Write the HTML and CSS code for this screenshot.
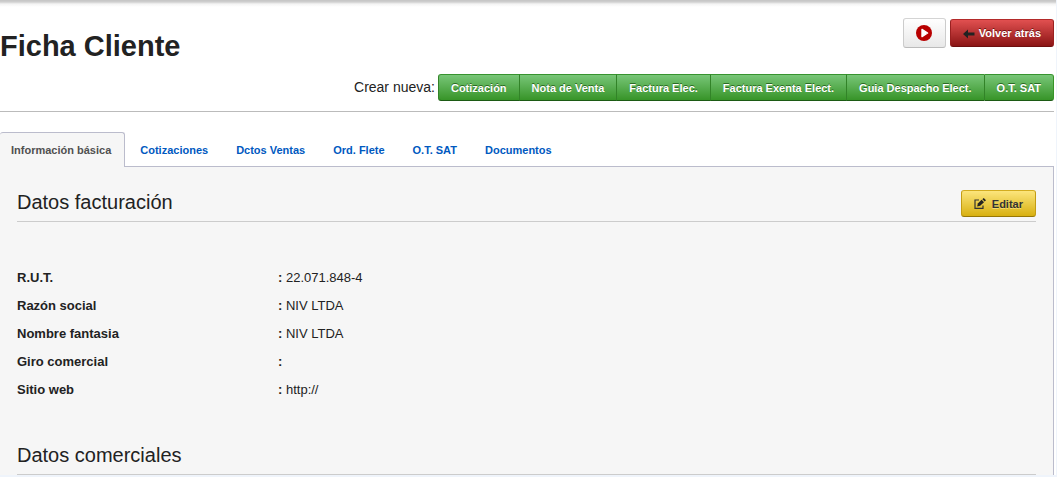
FILE: index.html
```
<!DOCTYPE html>
<html lang="es">
	<head>
		<meta charset="UTF-8" />
		<meta
			name="viewport"
			content="width=device-width, initial-scale=1.0" />
		<title>Ficha Cliente</title>
		<link rel="stylesheet" href="styles.css">
	</head>
	<body>
		<div class="page">
			<header class="header">
				<div class="title-row">
					<h1>Ficha Cliente</h1>
					<div class="actions">
						<button type="button" class="btn btn-white" aria-label="Reproducir">
							<svg width="16" height="16" viewBox="0 0 16 16">
								<circle cx="8" cy="8" r="8" fill="#b80000" />
								<path d="M6 4.4 L11.6 8 L6 11.6 Z" fill="#fff" stroke="#fff" stroke-width="1.4" stroke-linejoin="round" />
							</svg>
						</button>
						<button type="button" class="btn btn-red">
							<svg class="arrow" width="12" height="10" viewBox="0 0 12 10">
								<path d="M0 5 L5 0.5 V3.5 H11.5 V6.5 H5 V9.5 Z" fill="#222" />
							</svg>
							Volver atrás
						</button>
					</div>
				</div>
				<div class="create-row">
					<span>Crear nueva:</span>
					<div class="btn-group">
						<button type="button" class="btn btn-green">Cotización</button>
						<button type="button" class="btn btn-green">Nota de Venta</button>
						<button type="button" class="btn btn-green">Factura Elec.</button>
						<button type="button" class="btn btn-green">Factura Exenta Elect.</button>
						<button type="button" class="btn btn-green">Guia Despacho Elect.</button>
						<button type="button" class="btn btn-green">O.T. SAT</button>
					</div>
				</div>
			</header>

			<nav class="tabs">
				<a href="#basica" class="active">Información básica</a>
				<a href="#cotizaciones">Cotizaciones</a>
				<a href="#ventas">Dctos Ventas</a>
				<a href="#flete">Ord. Flete</a>
				<a href="#ot">O.T. SAT</a>
				<a href="#documentos">Documentos</a>
			</nav>

			<main class="panel" id="basica">
				<section>
					<div class="section-title">
						<h2>Datos facturación</h2>
						<button type="button" class="btn btn-yellow">
							<svg width="12" height="12" viewBox="0 0 12 12">
								<path d="M5 2 H1 V10.4 H9 V7.5" fill="none" stroke="#333" stroke-width="1.2" />
								<path d="M3.2 8.4 L3.8 5.4 L7.6 1.8 L10 4.2 L6.2 7.8 Z" fill="#222" />
								<path d="M8.4 1.2 L9.7 0 L12 2.3 L10.7 3.5 Z" fill="#222" />
							</svg>
							Editar
						</button>
					</div>
					<table class="data">
						<tr>
							<th scope="row">R.U.T.</th>
							<td><b>:</b> 22.071.848-4</td>
						</tr>
						<tr>
							<th scope="row">Razón social</th>
							<td><b>:</b> NIV LTDA</td>
						</tr>
						<tr>
							<th scope="row">Nombre fantasia</th>
							<td><b>:</b> NIV LTDA</td>
						</tr>
						<tr>
							<th scope="row">Giro comercial</th>
							<td><b>:</b></td>
						</tr>
						<tr>
							<th scope="row">Sitio web</th>
							<td><b>:</b> http://</td>
						</tr>
					</table>
				</section>
				<section>
					<div class="section-title">
						<h2>Datos comerciales</h2>
					</div>
				</section>
			</main>
		</div>
	</body>
</html>
```
FILE: styles.css
```
* {
	box-sizing: border-box;
}

body {
	margin: 0;
	background-color: #eff4fb;
	font-family: "Liberation Sans", Arial, sans-serif;
	font-size: 13px;
	color: #222;
}

.page {
	margin-right: 1px;
	padding-right: 2px;
	background: #fff linear-gradient(#c4c4c4, #d0d0d0 2px, #f4f4f4 4px, #fff 7px) no-repeat;
}

.header {
	padding-top: 18px;
	border-bottom: 1px solid #bbb;
}

.title-row {
	display: flex;
	justify-content: space-between;
	align-items: flex-start;
	height: 56px;
}

h1 {
	margin: 10px 0 0;
	font-size: 29px;
	line-height: 36px;
}

.actions {
	display: flex;
	align-items: center;
	gap: 4px;
}

.btn {
	display: flex;
	align-items: center;
	justify-content: center;
	height: 28px;
	padding: 0 12px;
	border: 1px solid;
	border-radius: 3px;
	font-family: inherit;
	font-size: 11px;
	font-weight: 700;
	white-space: nowrap;
	cursor: pointer;
}

.btn-white {
	width: 43px;
	height: 30px;
	background: linear-gradient(#fff, #e8e8e8);
	border-color: #d4d4d4 #ccc #bbb;
}

.btn-white svg {
	flex-shrink: 0;
}

.btn-red {
	gap: 4px;
	background: linear-gradient(#e15050, #8b1515);
	border-color: #b32a2a #9a2020 #6e0f0f;
	color: #fff;
	text-shadow: 0 -1px 0 #701010;
}

.arrow {
	margin-top: 2px;
}

.create-row {
	display: flex;
	justify-content: flex-end;
	gap: 3px;
	height: 37px;
	font-size: 14px;
	line-height: 26px;
}

.btn-group {
	display: flex;
}

.btn-green {
	height: 27px;
	background: linear-gradient(#78c678, #379428);
	border-color: #37932f #379428 #1c5a14;
	border-left-color: #328328;
	border-right-width: 0;
	border-radius: 0;
	color: #fff;
	text-shadow: 0 -1px 0 #2a6b22;
}

.btn-green:first-child {
	border-radius: 3px 0 0 3px;
}

.btn-green:last-child {
	border-right-width: 1px;
	border-radius: 0 3px 3px 0;
}

.tabs {
	display: flex;
	gap: 2px;
	margin-top: 20px;
	border-bottom: 1px solid #bbbccc;
}

.tabs a {
	padding: 1px 12px 0;
	border: 1px solid transparent;
	border-bottom: 0;
	font-size: 11px;
	font-weight: 700;
	line-height: 32px;
	color: #0059bf;
	text-decoration: none;
}

.tabs .active {
	margin-bottom: -1px;
	padding: 1px 13px 1px 11px;
	background-color: #f6f6f6;
	border-color: #bbbccc;
	border-left: 0;
	border-radius: 3px 3px 0 0;
	color: #505050;
}

.panel {
	padding: 23px 17px 0;
	background-color: #f6f6f6;
	border-right: 1px solid #bbbccc;
}

.section-title {
	display: flex;
	justify-content: space-between;
	height: 32px;
	border-bottom: 1px solid #ccc;
}

h2 {
	margin: 0;
	font-size: 20px;
	font-weight: 400;
	line-height: 24px;
}

.btn-yellow {
	gap: 6px;
	height: 27px;
	background: linear-gradient(#fce57c, #d8b010);
	border-color: #d3ac1f #c39c13 #977705;
	color: #333;
	text-shadow: 0 1px 0 #f3da70;
}

.data {
	width: 100%;
	margin: 42px 0 39px;
	border-collapse: collapse;
	line-height: 28px;
}

.data th,
.data td {
	padding: 0;
	text-align: left;
}

.data th {
	width: 261px;
}
```
